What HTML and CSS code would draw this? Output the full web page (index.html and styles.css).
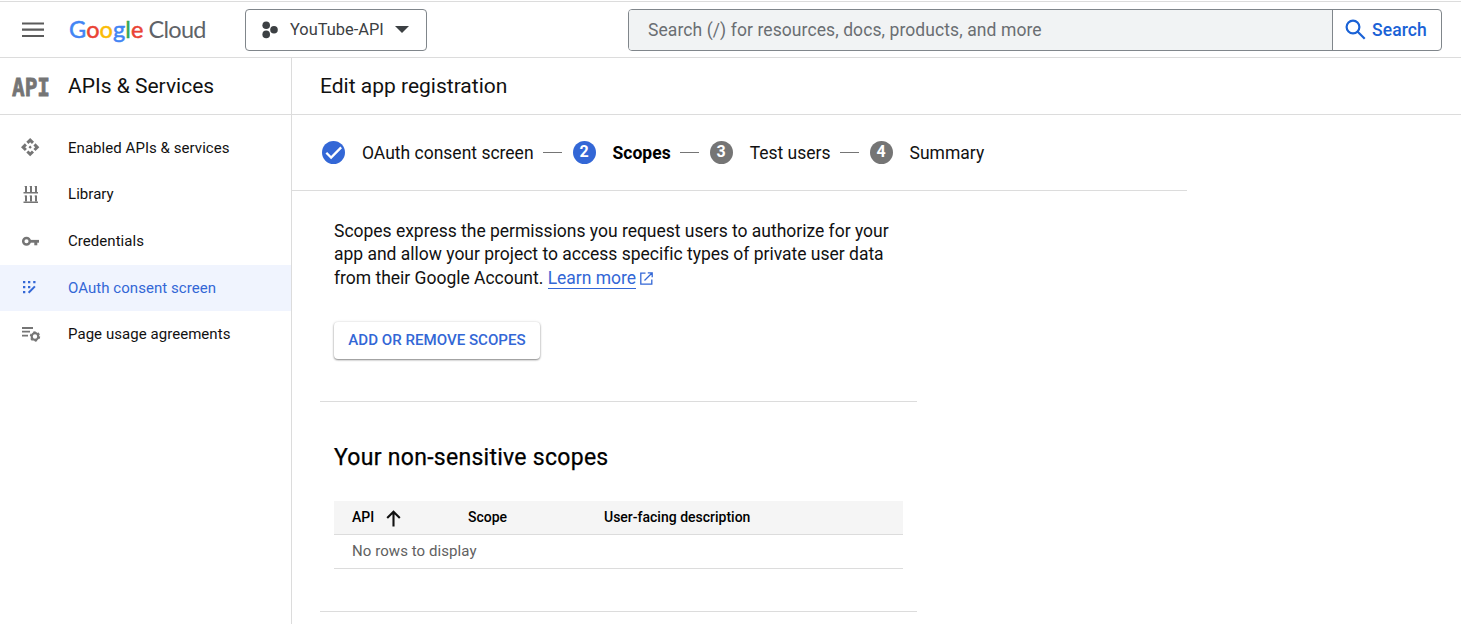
FILE: index.html
```html
<!DOCTYPE html>
<html lang="en">
<head>
<meta charset="utf-8">
<title>Edit app registration – Google Cloud</title>
<link rel="stylesheet" href="styles.css">
</head>
<body>
<header class="topbar">
  <svg class="menu" viewBox="0 0 22 16"><path d="M0 1.500h22M0 7.700h22M0 14h22" stroke="#5b5b5b" stroke-width="2.200"/></svg>
  <div class="logo"><span class="google"><span class="b">G</span><span class="r">o</span><span class="y">o</span><span class="b">g</span><span class="g">l</span><span class="r">e</span></span><span class="cloud">Cloud</span></div>
  <div class="project">
    <svg class="dots" viewBox="0 0 16 18"><g fill="#3c4043"><circle cx="4.2" cy="4.2" r="3.8"/><circle cx="4.2" cy="13.4" r="3.8"/><circle cx="12" cy="8.8" r="3.8"/></g></svg>
    <span class="project-name">YouTube-API</span>
    <svg class="caret" viewBox="0 0 14 7"><path d="M0 0h14L7 7z" fill="#3c4043"/></svg>
  </div>
  <div class="search">
    <div class="search-input">Search (/) for resources, docs, products, and more</div>
    <div class="search-button">
      <svg class="lens" viewBox="0 0 21 21"><g fill="none" stroke="#1a62d6" stroke-width="2.2"><circle cx="8" cy="8" r="6.4"/><path d="M12.5 12.5l7.2 7.2"/></g></svg>
      <span>Search</span>
    </div>
  </div>
</header>
<div class="layout">
  <nav class="side">
    <div class="side-head"><span class="api-mark"><span>API</span></span><span class="side-title">APIs &amp; Services</span></div>
    <div class="items">
      <div class="item">
        <svg class="icon" viewBox="1 1 24 24"><path fill="#757575" d="M14 12l-2 2-2-2 2-2zM12 6l2.120 2.120 2.500-2.500L12 1 7.380 5.620l2.500 2.500zM6 12l2.120-2.120-2.500-2.500L1 12l4.620 4.620 2.500-2.500zM18 12l-2.120 2.120 2.500 2.500L23 12l-4.620-4.620-2.500 2.500zM12 18l-2.120-2.120-2.500 2.500L12 23l4.620-4.620-2.500-2.500z"/></svg>
        <span>Enabled APIs &amp; services</span></div>
      <div class="item">
        <svg class="icon" viewBox="0 0 20 20"><path d="M2.500 7.700h14.500M2.500 17.300h14.500" stroke="#757575" stroke-width="1.600"/><path d="M5 1v6M10 1v6M15 1v6M5 10.500v6M10 10.500v6M15 10.500v6" stroke="#757575" stroke-width="2"/><path d="M3.300 1.500h2M8.300 1.500h2M13.300 1.500h2M3.300 11h2M8.300 11h2M13.300 11h2" stroke="#757575" stroke-opacity=".5"/></svg>
        <span class="library">Library</span></div>
      <div class="item">
        <svg class="icon" viewBox="0 0 20 20"><g fill="none" stroke="#757575"><circle cx="5.500" cy="10.300" r="3.300" stroke-width="2.500"/><path d="M9 10.300h9" stroke-width="2.800"/><path d="M14.800 10.300v4" stroke-width="3"/></g></svg>
        <span>Credentials</span></div>
      <div class="item active">
        <svg class="icon" viewBox="0 0 20 20"><path d="M2 3h2.300v2.300H2zM7 3h2.300v2.300H7zM12.200 3h2.300v2.300h-2.300zM2 8h2.300v2.300H2zM7 8h2.300v2.300H7zM2 13h2.300v2.300H2z" fill="#3367d6"/><path d="M7.600 14.700l6.300-6.300" stroke="#3367d6" stroke-width="2"/></svg>
        <span>OAuth consent screen</span></div>
      <div class="item">
        <svg class="icon" viewBox="0 0 20 20"><path d="M1 4h11M1 7.700h8M1 11.700h6" stroke="#757575" stroke-width="1.800"/><circle cx="14" cy="12.500" r="3.300" fill="none" stroke="#757575" stroke-width="2.200"/><circle cx="14" cy="12.500" r="4.500" fill="none" stroke="#757575" stroke-width="1.400" stroke-dasharray="2.360 2.352"/></svg>
        <span>Page usage agreements</span></div>
    </div>
  </nav>
  <main class="main">
    <div class="page-head"><h1>Edit app registration</h1></div>
    <div class="stepper">
      <span class="badge on"><svg viewBox="0 0 24 24"><path d="M4.500 12.300l5 5 10.500-10.600" fill="none" stroke="#fff" stroke-width="2.400"/></svg></span>
      <span class="step">OAuth consent screen</span><i class="dash"></i>
      <span class="badge on">2</span><span class="step current">Scopes</span><i class="dash"></i>
      <span class="badge">3</span><span class="step">Test users</span><i class="dash"></i>
      <span class="badge">4</span><span class="step">Summary</span>
    </div>
    <section class="intro">
      <p><span class="lead">Scopes express the permissions you request users to authorize for your</span><br>app and allow your project to access specific types of private user data<br>from their Google Account. <a class="learn">Learn more</a><svg class="ext" viewBox="0 0 13 13"><path d="M5.500 1.200H.8v11h11V7.500M7.800.8h4.400v4.400M12 1L4.500 8.500" fill="none" stroke="#3367d6" stroke-width="1.300"/></svg></p>
      <button class="add">ADD OR REMOVE SCOPES</button>
    </section>
    <section class="scopes">
      <h2>Your non-sensitive scopes</h2>
      <div class="table">
        <div class="row head"><span class="c1"><span>API</span><svg class="arrow" viewBox="0 0 15 17"><path d="M7.500 16.500V2M1.200 8l6.300-6.300L13.800 8" fill="none" stroke="#111" stroke-width="2.100"/></svg></span><span class="c2">Scope</span><span>User-facing description</span></div>
        <div class="row empty">No rows to display</div>
      </div>
    </section>
  </main>
</div>
</body>
</html>
```
FILE: styles.css
```css
* { box-sizing: border-box; }
body { margin: 0; height: 624px; overflow: hidden; background: #fff; color: #111; font-family: Roboto, sans-serif; font-size: 15px; white-space: nowrap; }
svg { display: block; flex: none; }
.topbar { height: 57px; border-top: 1px solid #dcdcdc; border-bottom: 1px solid #dcdcdc; display: flex; align-items: center; margin-top: 1px; padding: 0 19px 0 22px; }
.menu { width: 22px; height: 16px; }
.logo { width: 176px; margin-left: 25px; display: flex; gap: 5px; font-family: Lato, sans-serif; font-size: 23.500px; line-height: 30px; padding-bottom: 2px; }
.google { font-weight: 400; letter-spacing: .1px; -webkit-text-stroke: .5px; }
.cloud { color: #5f6368; letter-spacing: -0.7px; }
.b { color: #4285f4; } .r { color: #ea4335; } .y { color: #fbbc05; } .g { color: #34a853; }
.project { width: 182px; height: 42px; border: 1px solid #80868b; border-radius: 4px; display: flex; align-items: center; padding-left: 16px; color: #3c4043; font-size: 16.400px; }
.dots { width: 16px; height: 18px; }
.project-name { width: 94px; margin-left: 12px; }
.caret { width: 14px; height: 7px; margin-left: 11px; }
.search { width: 814px; height: 42px; margin-left: auto; border: 1px solid #80868b; border-radius: 4px; display: flex; overflow: hidden; }
.search-input { flex: 1; background: #f1f3f4; color: #6a6e72; padding-left: 19px; font-size: 17.5px; line-height: 40px; letter-spacing: .09px; }
.search-button { width: 109px; border-left: 1px solid #80868b; display: flex; align-items: center; gap: 6px; padding-left: 12px; color: #1a62d6; font-weight: 500; font-size: 17.5px; letter-spacing: .1px; }
.lens { width: 21px; height: 21px; }
.layout { display: flex; height: 566px; }
.side { width: 292px; border-right: 1px solid #dcdcdc; }
.side-head { height: 57px; border-bottom: 1px solid #dcdcdc; display: flex; align-items: center; padding-left: 12px; }
.api-mark { width: 56px; color: #757575; font: bold 25px/30px "DejaVu Sans Mono", monospace; -webkit-text-stroke: .8px; padding-top: 3px; }
.api-mark span { display: inline-block; transform: scaleX(.84); transform-origin: 0 50%; }
.side-title { font-size: 21px; }
.items { padding-top: 10px; letter-spacing: .05px; }
.item { height: 46.500px; display: flex; align-items: center; padding-left: 21px; gap: 27px; }
.item.active { background: #f0f4fe; color: #3367d6; }
.icon { width: 20px; height: 20px; }
.library { margin-top: -1px; }
.main { flex: 1; }
.page-head { height: 57px; border-bottom: 1px solid #dcdcdc; padding-left: 28px; }
h1 { margin: 0; font-size: 21px; font-weight: 400; line-height: 56px; }
.stepper { width: 895px; height: 76px; border-bottom: 1px solid #dcdcdc; display: flex; align-items: center; padding-left: 30px; font-size: 17.5px; }
.badge { flex: none; width: 23px; height: 23px; border-radius: 50%; background: #757575; color: #fff; font-weight: 700; font-size: 16px; line-height: 22px; text-align: center; }
.on { background: #3367d6; }
.step { margin-left: 17px; }
.current { font-weight: 700; color: #000; }
.dash { flex: none; width: 19px; height: 1px; background: #757575; margin: 0 11px 0 9px; }
.intro { width: 597px; height: 211px; margin-left: 28px; padding: 28px 14px 0; border-bottom: 1px solid #dcdcdc; }
p { margin: 0; font-size: 17.5px; line-height: 23.800px; letter-spacing: -.012px; }
.lead { position: relative; top: 1px; }
.learn { display: inline-block; color: #3367d6; border-bottom: 1px solid #3367d6; line-height: 20px; }
.ext { display: inline-block; width: 13px; height: 13px; margin-left: 4px; vertical-align: -1px; }
.add { display: block; margin-top: 32px; width: 206px; height: 37px; border: 0; border-radius: 4px; background: #fff; color: #3367d6; font: 500 15.100px Roboto, sans-serif; padding: 0 0 2px; box-shadow: 0 1px 2px rgba(0,0,0,.45), 0 0 3px rgba(0,0,0,.12); }
.scopes { width: 597px; height: 210px; margin-left: 28px; padding: 41px 14px 0; border-bottom: 1px solid #dcdcdc; }
h2 { margin: 0; font-size: 23px; font-weight: 400; line-height: 30px; color: #000; letter-spacing: .28px; -webkit-text-stroke: .25px; }
.table { margin-top: 28px; }
.row { display: flex; align-items: center; height: 34px; border-bottom: 1px solid #dcdcdc; padding-left: 18px; }
.head { background: #f5f5f5; font-weight: 500; font-size: 14px; color: #000; padding-bottom: 1px; }
.c1 { width: 116px; display: flex; align-items: center; gap: 12px; }
.c2 { width: 136px; }
.arrow { width: 15px; height: 17px; position: relative; top: 1px; }
.empty { color: #616161; font-size: 15px; letter-spacing: .07px; padding-bottom: 1px; }
```
